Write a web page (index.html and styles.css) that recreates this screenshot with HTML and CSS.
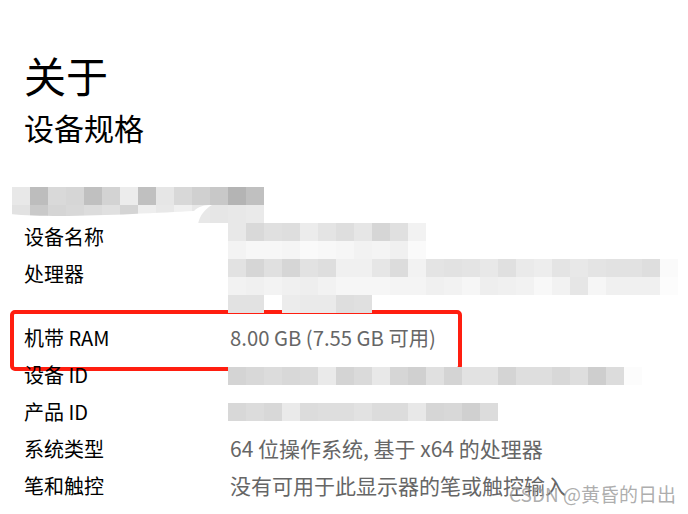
FILE: index.html
```html
<!DOCTYPE html>
<html lang="zh-CN">
<head>
<meta charset="utf-8">
<title>关于</title>
<link rel="stylesheet" href="styles.css">
</head>
<body>
<div class="page">
  <h1 class="title">关于</h1>
  <h2 class="subtitle">设备规格</h2>
  <div class="device-head"></div>
  <div class="specs">
    <div class="row"><div class="label">设备名称</div><div class="value"></div></div>
    <div class="row row-tall"><div class="label">处理器</div><div class="value"></div></div>
    <div class="row row-mark"><div class="label">机带 RAM</div><div class="value value-ram">8.00 GB (7.55 GB 可用)</div><div class="mark"></div></div>
    <div class="row"><div class="label">设备 ID</div><div class="value"></div></div>
    <div class="row"><div class="label">产品 ID</div><div class="value"></div></div>
    <div class="row"><div class="label">系统类型</div><div class="value">64 位操作系统, 基于 x64 的处理器</div></div>
    <div class="row"><div class="label">笔和触控</div><div class="value">没有可用于此显示器的笔或触控输入</div></div>
  </div>

  <svg class="mosaic" width="688" height="514" viewBox="0 0 688 514" aria-hidden="true">
    <g>
      <rect x="12" y="187" width="18" height="18" fill="#e8e8e8"/>
      <rect x="30" y="187" width="18" height="18" fill="#bdbdbd"/>
      <rect x="48" y="187" width="18" height="18" fill="#d9d9d9"/>
      <rect x="66" y="187" width="18" height="18" fill="#d6d6d6"/>
      <rect x="84" y="187" width="18" height="18" fill="#c0c0c0"/>
      <rect x="102" y="187" width="18" height="18" fill="#d3d3d3"/>
      <rect x="120" y="187" width="18" height="18" fill="#ececec"/>
      <rect x="138" y="187" width="18" height="18" fill="#c0c0c0"/>
      <rect x="156" y="187" width="18" height="18" fill="#e6e6e6"/>
      <rect x="174" y="187" width="18" height="18" fill="#d8d8d8"/>
      <rect x="192" y="187" width="18" height="18" fill="#d0d0d0"/>
      <rect x="210" y="187" width="18" height="18" fill="#c8c8c8"/>
      <rect x="228" y="187" width="18" height="18" fill="#b4b4b4"/>
      <rect x="246" y="187" width="18" height="18" fill="#c0c0c0"/>
    </g>
    <g>
      <rect x="12" y="205" width="18" height="18" fill="#e2e2e2"/>
      <rect x="30" y="205" width="18" height="18" fill="#c9c9c9"/>
      <rect x="48" y="205" width="18" height="18" fill="#d5d5d5"/>
      <rect x="66" y="205" width="18" height="18" fill="#d8d8d8"/>
      <rect x="84" y="205" width="18" height="18" fill="#dcdcdc"/>
      <rect x="102" y="205" width="18" height="18" fill="#e0e0e0"/>
      <rect x="120" y="205" width="18" height="18" fill="#d4d4d4"/>
      <rect x="138" y="205" width="18" height="18" fill="#eeeeee"/>
      <rect x="156" y="205" width="18" height="18" fill="#e8e8e8"/>
      <rect x="174" y="205" width="18" height="18" fill="#f0f0f0"/>
      <rect x="192" y="205" width="18" height="18" fill="#e8e8e8"/>
      <rect x="210" y="205" width="18" height="18" fill="#e6e6e6"/>
      <rect x="228" y="205" width="18" height="18" fill="#e8e8e8"/>
      <rect x="246" y="205" width="18" height="18" fill="#eaeaea"/>
      <path d="M10,214 C60,219 150,213 194,211 C199,206 204,205 212,205 C205,209 200,215 198,224 L10,224 Z" fill="#ffffff"/>
    </g>
    <g>
      <rect x="228" y="223" width="18" height="18" fill="#e8e8e8"/>
      <rect x="246" y="223" width="18" height="18" fill="#d9d9d9"/>
      <rect x="264" y="223" width="18" height="18" fill="#e0e0e0"/>
      <rect x="282" y="223" width="18" height="18" fill="#dedede"/>
      <rect x="300" y="223" width="18" height="18" fill="#ececec"/>
      <rect x="318" y="223" width="18" height="18" fill="#e4e4e4"/>
      <rect x="336" y="223" width="18" height="18" fill="#dedede"/>
      <rect x="354" y="223" width="18" height="18" fill="#e6e6e6"/>
      <rect x="372" y="223" width="18" height="18" fill="#d6d6d6"/>
      <rect x="390" y="223" width="18" height="18" fill="#e0e0e0"/>
      <rect x="408" y="223" width="18" height="18" fill="#f2f2f2"/>

      <rect x="228" y="241" width="18" height="18" fill="#f3f3f3"/>
      <rect x="246" y="241" width="18" height="18" fill="#f7f7f7"/>
      <rect x="264" y="241" width="18" height="18" fill="#f7f7f7"/>
      <rect x="282" y="241" width="18" height="18" fill="#f5f5f5"/>
      <rect x="300" y="241" width="18" height="18" fill="#fafafa"/>
      <rect x="318" y="241" width="18" height="18" fill="#f8f8f8"/>
      <rect x="336" y="241" width="18" height="18" fill="#f6f6f6"/>
      <rect x="354" y="241" width="18" height="18" fill="#f2f2f2"/>
      <rect x="372" y="241" width="18" height="18" fill="#f4f4f4"/>
      <rect x="390" y="241" width="18" height="18" fill="#f0f0f0"/>
      <rect x="408" y="241" width="18" height="18" fill="#fafafa"/>
    </g>
    <g>
      <rect x="228" y="259" width="18" height="18" fill="#e2e2e2"/>
      <rect x="246" y="259" width="18" height="18" fill="#d6d6d6"/>
      <rect x="264" y="259" width="18" height="18" fill="#e0e0e0"/>
      <rect x="282" y="259" width="18" height="18" fill="#d6d6d6"/>
      <rect x="300" y="259" width="18" height="18" fill="#e2e2e2"/>
      <rect x="318" y="259" width="18" height="18" fill="#dedede"/>
      <rect x="336" y="259" width="18" height="18" fill="#f0f0f0"/>
      <rect x="354" y="259" width="18" height="18" fill="#f0f0f0"/>
      <rect x="372" y="259" width="18" height="18" fill="#e6e6e6"/>
      <rect x="390" y="259" width="18" height="18" fill="#dcdcdc"/>
      <rect x="408" y="259" width="18" height="18" fill="#f2f2f2"/>
      <rect x="426" y="259" width="18" height="18" fill="#e4e4e4"/>
      <rect x="444" y="259" width="18" height="18" fill="#e2e2e2"/>
      <rect x="462" y="259" width="18" height="18" fill="#e4e4e4"/>
      <rect x="480" y="259" width="18" height="18" fill="#e8e8e8"/>
      <rect x="498" y="259" width="18" height="18" fill="#e0e0e0"/>
      <rect x="516" y="259" width="18" height="18" fill="#eaeaea"/>
      <rect x="534" y="259" width="18" height="18" fill="#ededed"/>
      <rect x="552" y="259" width="18" height="18" fill="#e4e4e4"/>
      <rect x="570" y="259" width="18" height="18" fill="#e8e8e8"/>
      <rect x="588" y="259" width="18" height="18" fill="#e4e4e4"/>
      <rect x="606" y="259" width="18" height="18" fill="#e2e2e2"/>
      <rect x="624" y="259" width="18" height="18" fill="#e2e2e2"/>
      <rect x="642" y="259" width="18" height="18" fill="#dedede"/>
      <rect x="660" y="259" width="18" height="18" fill="#fafafa"/>
    </g>
    <g>
      <rect x="228" y="277" width="18" height="18" fill="#f2f2f2"/>
      <rect x="246" y="277" width="18" height="18" fill="#f0f0f0"/>
      <rect x="264" y="277" width="18" height="18" fill="#f3f3f3"/>
      <rect x="282" y="277" width="18" height="18" fill="#f0f0f0"/>
      <rect x="300" y="277" width="18" height="18" fill="#eeeeee"/>
      <rect x="318" y="277" width="18" height="18" fill="#f2f2f2"/>
      <rect x="336" y="277" width="18" height="18" fill="#f6f6f6"/>
      <rect x="354" y="277" width="18" height="18" fill="#f6f6f6"/>
      <rect x="372" y="277" width="18" height="18" fill="#f6f6f6"/>
      <rect x="390" y="277" width="18" height="18" fill="#f4f4f4"/>
      <rect x="408" y="277" width="18" height="18" fill="#f4f4f4"/>
      <rect x="426" y="277" width="18" height="18" fill="#f0f0f0"/>
      <rect x="444" y="277" width="18" height="18" fill="#f2f2f2"/>
      <rect x="462" y="277" width="18" height="18" fill="#f6f6f6"/>
      <rect x="480" y="277" width="18" height="18" fill="#eeeeee"/>
      <rect x="498" y="277" width="18" height="18" fill="#f0f0f0"/>
      <rect x="516" y="277" width="18" height="18" fill="#f2f2f2"/>
      <rect x="534" y="277" width="18" height="18" fill="#f8f8f8"/>
      <rect x="552" y="277" width="18" height="18" fill="#f2f2f2"/>
      <rect x="570" y="277" width="18" height="18" fill="#e6e6e6"/>
      <rect x="588" y="277" width="18" height="18" fill="#f6f6f6"/>
      <rect x="606" y="277" width="18" height="18" fill="#f0f0f0"/>
      <rect x="624" y="277" width="18" height="18" fill="#f0f0f0"/>
      <rect x="642" y="277" width="18" height="18" fill="#f0f0f0"/>
      <rect x="660" y="277" width="18" height="18" fill="#fcfcfc"/>
    </g>
    <g>
      <rect x="228" y="295" width="18" height="18" fill="#e2e2e2"/>
      <rect x="246" y="295" width="18" height="18" fill="#e2e2e2"/>
      <rect x="282" y="295" width="18" height="18" fill="#ececec"/>
      <rect x="300" y="295" width="18" height="18" fill="#eaeaea"/>
      <rect x="318" y="295" width="18" height="18" fill="#eaeaea"/>
      <rect x="336" y="295" width="18" height="18" fill="#dedede"/>
      <rect x="354" y="295" width="18" height="18" fill="#e0e0e0"/>
    </g>
    <g>
      <rect x="228" y="367" width="18" height="18" fill="#d4d4d4"/>
      <rect x="246" y="367" width="18" height="18" fill="#d8d8d8"/>
      <rect x="264" y="367" width="18" height="18" fill="#dcdcdc"/>
      <rect x="282" y="367" width="18" height="18" fill="#d8d8d8"/>
      <rect x="300" y="367" width="18" height="18" fill="#dadada"/>
      <rect x="318" y="367" width="18" height="18" fill="#eaeaea"/>
      <rect x="336" y="367" width="18" height="18" fill="#d4d4d4"/>
      <rect x="354" y="367" width="18" height="18" fill="#dadada"/>
      <rect x="372" y="367" width="18" height="18" fill="#e8e8e8"/>
      <rect x="390" y="367" width="18" height="18" fill="#d6d6d6"/>
      <rect x="408" y="367" width="18" height="18" fill="#d0d0d0"/>
      <rect x="426" y="367" width="18" height="18" fill="#e0e0e0"/>
      <rect x="444" y="367" width="18" height="18" fill="#d4d4d4"/>
      <rect x="462" y="367" width="18" height="18" fill="#e2e2e2"/>
      <rect x="480" y="367" width="18" height="18" fill="#e2e2e2"/>
      <rect x="498" y="367" width="18" height="18" fill="#d4d4d4"/>
      <rect x="516" y="367" width="18" height="18" fill="#dedede"/>
      <rect x="534" y="367" width="18" height="18" fill="#dedede"/>
      <rect x="552" y="367" width="18" height="18" fill="#d8d8d8"/>
      <rect x="570" y="367" width="18" height="18" fill="#dedede"/>
      <rect x="588" y="367" width="18" height="18" fill="#cecece"/>
      <rect x="606" y="367" width="18" height="18" fill="#dcdcdc"/>
      <rect x="624" y="367" width="18" height="18" fill="#fcfcfc"/>
    </g>
    <g>
      <rect x="228" y="403" width="18" height="18" fill="#d8d8d8"/>
      <rect x="246" y="403" width="18" height="18" fill="#dcdcdc"/>
      <rect x="264" y="403" width="18" height="18" fill="#d8d8d8"/>
      <rect x="282" y="403" width="18" height="18" fill="#eaeaea"/>
      <rect x="300" y="403" width="18" height="18" fill="#dcdcdc"/>
      <rect x="318" y="403" width="18" height="18" fill="#dedede"/>
      <rect x="336" y="403" width="18" height="18" fill="#dedede"/>
      <rect x="354" y="403" width="18" height="18" fill="#e2e2e2"/>
      <rect x="372" y="403" width="18" height="18" fill="#dcdcdc"/>
      <rect x="390" y="403" width="18" height="18" fill="#dcdcdc"/>
      <rect x="408" y="403" width="18" height="18" fill="#e8e8e8"/>
      <rect x="426" y="403" width="18" height="18" fill="#d6d6d6"/>
      <rect x="444" y="403" width="18" height="18" fill="#d8d8d8"/>
      <rect x="462" y="403" width="18" height="18" fill="#d0d0d0"/>
      <rect x="480" y="403" width="18" height="18" fill="#dcdcdc"/>
    </g>
  </svg>

  <div class="watermark">CSDN @黄昏的日出</div>
</div>
</body>
</html>
```

FILE: styles.css
```css
html, body {
  margin: 0;
  padding: 0;
  background: #ffffff;
}

body {
  font-family: "Noto Sans CJK SC", "Noto Sans", sans-serif;
  color: #000000;
  width: 688px;
  height: 514px;
  overflow: hidden;
}

.page {
  position: relative;
  width: 688px;
  height: 514px;
  padding-top: 54px;
  box-sizing: border-box;
}

.title {
  margin: 0 0 0 24px;
  font-size: 42px;
  line-height: 42px;
  font-weight: 400;
}

.subtitle {
  margin: 16px 0 0 24px;
  font-size: 30px;
  line-height: 30px;
  font-weight: 400;
}

.device-head {
  height: 76px;
}

.specs {
  display: flex;
  flex-direction: column;
}

.row {
  position: relative;
  display: flex;
  height: 37px;
  line-height: 37px;
  font-size: 20px;
}

.row-tall {
  height: 64px;
}

.label {
  width: 206px;
  padding-left: 24px;
  flex: none;
}

.value {
  color: #666666;
  white-space: nowrap;
  font-size: 21px;
}

.value-ram {
  font-size: 20.3px;
}

.mark {
  position: absolute;
  left: 10px;
  top: -9px;
  width: 452px;
  height: 61px;
  box-sizing: border-box;
  border: 4px solid #ff1e10;
  border-radius: 5px;
}

.mosaic {
  position: absolute;
  left: 0;
  top: 0;
  pointer-events: none;
}

.watermark {
  position: absolute;
  right: 12px;
  bottom: 10px;
  font-size: 19px;
  line-height: 20px;
  color: rgba(160, 160, 160, 0.85);
  white-space: nowrap;
}
```
